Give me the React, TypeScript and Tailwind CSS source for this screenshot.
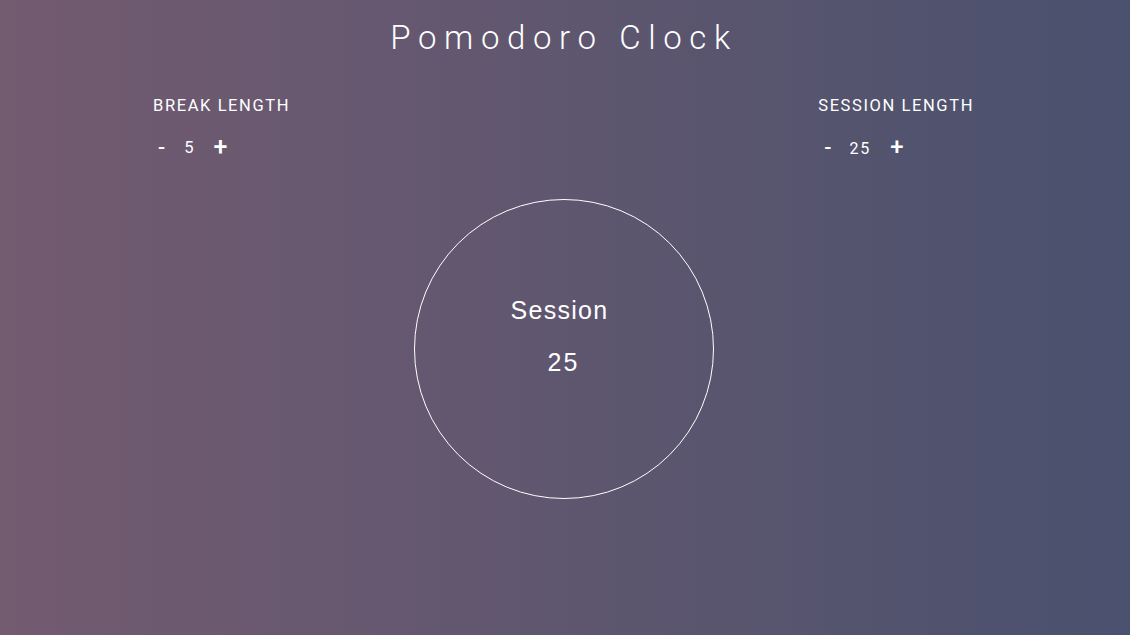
export default function App() {
  return (
    <div
      className="w-[1130px] h-[635px] overflow-hidden text-white bg-gradient-to-r from-[#735b70] to-[#4a516e]"
      style={{ fontFamily: "Roboto, 'Liberation Sans', sans-serif" }}
    >
      <h1 className="pt-[18px] text-center text-[33px] leading-[40px] font-light tracking-[7.6px] pr-[2px]">
        Pomodoro Clock
      </h1>
      <div className="flex justify-between pl-[153px] pr-[156px] mt-[38px]">
        <div>
          <div className="text-[16.5px] leading-[20px] tracking-[1.6px]">BREAK LENGTH</div>
          <div className="flex items-center mt-[19px] h-[24px]">
            <button className="text-[21px] leading-[24px] ml-[5px] font-medium">-</button>
            <span className="text-[16.5px] ml-[19px] tracking-[1px] mt-[3px]">5</span>
            <button className="text-[25px] leading-[24px] ml-[19px] font-medium">+</button>
          </div>
        </div>
        <div>
          <div className="text-[16.5px] leading-[20px] tracking-[1.6px]">SESSION LENGTH</div>
          <div className="flex items-center mt-[19px] h-[24px]">
            <button className="text-[21px] leading-[24px] ml-[6px] font-medium">-</button>
            <span className="text-[16px] ml-[18px] tracking-[2px] mt-[3px]">25</span>
            <button className="text-[24px] leading-[24px] ml-[19px] font-medium">+</button>
          </div>
        </div>
      </div>
      <div className="flex justify-center pr-[3px] mt-[40px]">
        <div
          className="w-[300px] h-[300px] rounded-full border border-white flex flex-col items-center"
          style={{ fontFamily: "'Liberation Sans', Arial, sans-serif" }}
        >
          <div className="mt-[95px] text-[25px] leading-[30px] tracking-[1.3px] pr-[8px]">Session</div>
          <div className="mt-[22px] text-[25px] leading-[30px] tracking-[2px]">25</div>
        </div>
      </div>
    </div>
  );
}
